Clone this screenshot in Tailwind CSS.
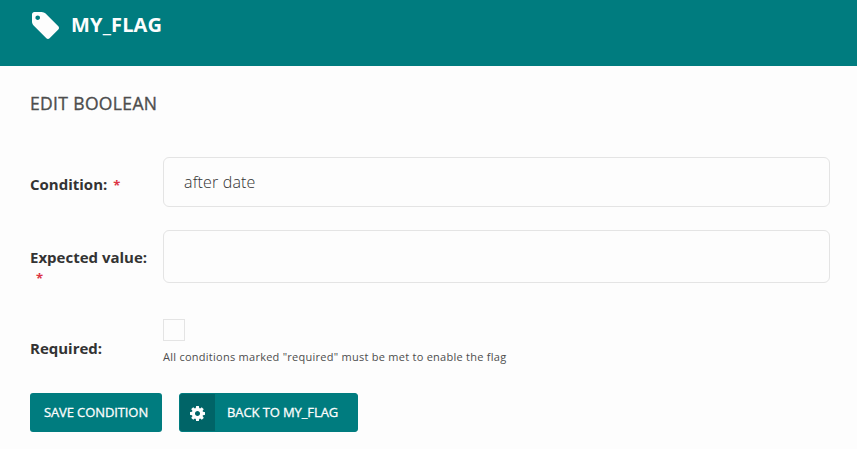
<!DOCTYPE html>
<html lang="en">
<head>
<meta charset="utf-8">
<title>Edit Boolean</title>
<script src="https://cdn.jsdelivr.net/npm/@tailwindcss/browser@4"></script>
</head>
<body class="h-[449px] overflow-hidden bg-[#fdfdfd] font-['Open_Sans',sans-serif] text-[#333]">
<header class="flex h-[66px] bg-[#007c7f] pl-8 pt-3 text-[#fdfdfd]">
  <svg class="h-[27px] w-[27px]" viewBox="0 128 1515 1515" fill="currentColor"><path d="M448 448q0-53-37.5-90.5t-90.5-37.5-90.5 37.5-37.5 90.5 37.5 90.5 90.5 37.5 90.5-37.500 37.500-90.500zm1067 576q0 53-37 90l-491 492q-39 37-91 37-53 0-90-37l-715-716q-38-37-64.500-101t-26.500-117v-416q0-52 38-90t90-38h416q53 0 117 26.500t102 64.500l715 714q37 39 37 91z"/></svg>
  <h1 class="ml-3 text-[20px] leading-[26px] font-bold tracking-[0.15px] whitespace-nowrap">MY_FLAG</h1>
</header>
<main class="pl-[30px] pr-[27px]">
  <h2 class="pt-[25px] text-[17.5px] leading-6 font-medium tracking-[0.35px] text-[#4d4d4d] [-webkit-text-stroke:0.35px_#4d4d4d]">EDIT BOOLEAN</h2>
  <form>
    <div class="mt-[42px] flex h-[50px]">
      <label class="w-[133px] shrink-0 pt-[17px] text-[15px] leading-5 font-bold whitespace-nowrap">Condition:<span class="ml-[6px] text-[13px] text-[#dc3545]">*</span></label>
      <div class="flex flex-1 items-center rounded-md border border-[#e4e4e4] pl-5 text-[16px] font-light tracking-[0.15px]">after date</div>
    </div>
    <div class="mt-[23px] flex h-[53px]">
      <label class="w-[133px] shrink-0 pt-[17px] text-[15px] leading-5 font-bold whitespace-nowrap">Expected value:<br><span class="ml-[6px] text-[13px] text-[#dc3545]">*</span></label>
      <div class="flex-1 rounded-md border border-[#e4e4e4]"></div>
    </div>
    <div class="mt-9 flex h-[50px]">
      <label class="w-[133px] shrink-0 pt-[19px] text-[15px] leading-5 font-bold">Required:</label>
      <div>
        <div class="h-[22px] w-[22px] border border-[#e4e4e4]"></div>
        <p class="mt-[7px] text-[11px] leading-[18px] tracking-[0.26px] whitespace-nowrap text-[#4d4d4d]">All conditions marked "required" must be met to enable the flag</p>
      </div>
    </div>
    <div class="mt-6 flex h-[39px] gap-[17px] text-[13px] font-medium tracking-[-0.1px] text-[#fdfdfd] [-webkit-text-stroke:0.3px_#fdfdfd]">
      <button type="button" class="w-[132px] rounded-[3px] bg-[#007c7f] whitespace-nowrap">SAVE CONDITION</button>
      <button type="button" class="flex w-[179px] items-center overflow-hidden rounded-[3px] border border-[#007c7f] bg-[#007c7f] whitespace-nowrap">
        <span class="flex h-full w-[35px] items-center justify-center bg-[#006467]"><svg class="mt-[2px] mr-px h-[15px] w-[15px]" viewBox="128 128 1536 1536" fill="currentColor"><path d="M1152 896q0-106-75-181t-181-75-181 75-75 181 75 181 181 75 181-75 75-181zm512-109v222q0 12-8 23t-20 13l-185 28q-19 54-39 91 35 50 107 138 10 12 10 25t-9 23q-27 37-99 108t-94 71q-12 0-26-9l-138-108q-44 23-91 38-16 136-29 186-7 28-36 28h-222q-14 0-24.500-8.500t-11.500-21.500l-28-184q-49-16-90-37l-141 107q-10 9-25 9-14 0-25-11-126-114-165-168-7-10-7-23 0-12 8-23 15-21 51-66.500t54-70.500q-27-50-41-99l-183-27q-13-2-21-12.500t-8-23.500v-222q0-12 8-23t19-13l186-28q14-46 39-92-40-57-107-138-10-12-10-24 0-10 9-23 26-36 98.500-107.500t94.500-71.500q13 0 26 10l138 107q44-23 91-38 16-136 29-186 7-28 36-28h222q14 0 24.500 8.500t11.500 21.500l28 184q49 16 90 37l142-107q9-9 24-9 13 0 25 10 129 119 165 170 7 8 7 22 0 12-8 23-15 21-51 66.500t-54 70.500q26 50 41 98l183 28q13 2 21 12.500t8 23.500z"/></svg></span>
        <span class="ml-3">BACK TO MY_FLAG</span>
      </button>
    </div>
  </form>
</main>
</body>
</html>
